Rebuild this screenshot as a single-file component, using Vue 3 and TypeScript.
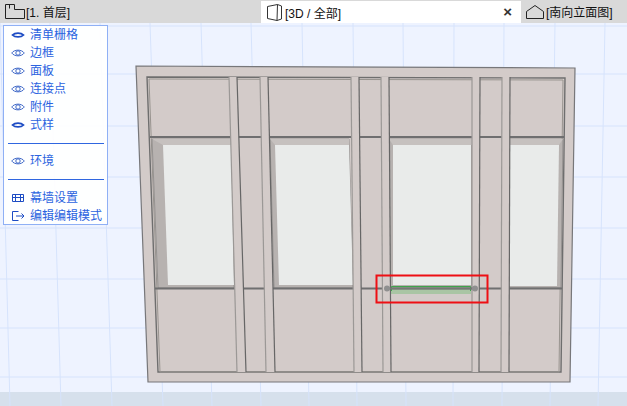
<template>
  <div class="app">
    <div class="tabs">
      <div class="tab first">
        <svg class="tab-icon" width="20" height="15" viewBox="0 0 20 15">
          <path d="M0.5 0.5H9.5V5.5H19.5V14.5H0.5Z M4.5 0.5V4.5" fill="none" stroke="#222" stroke-width="1" />
        </svg>
        <span>[1. 首层]</span>
      </div>
      <div class="tab active">
        <svg class="tab-icon" width="17" height="18" viewBox="0 0 17 18">
          <path d="M1.5 3.5L11.5 1.5L15.5 3V16L11 17.5L1.5 15.5Z M11.5 1.5L11 17.5" fill="none" stroke="#333" stroke-width="1" />
        </svg>
        <span>[3D / 全部]</span>
        <span class="close">×</span>
      </div>
      <div class="tab last">
        <svg class="tab-icon" width="18" height="14" viewBox="0 0 18 14">
          <path d="M0.5 6.5L9 0.5L17.5 6.5V13.5H0.5Z" fill="none" stroke="#222" stroke-width="1" />
        </svg>
        <span>[南向立面图]</span>
      </div>
    </div>

    <div class="stage">
      <svg class="scene" width="627" height="383" viewBox="0 23 627 383">
        <rect x="0" y="23" width="627" height="369" fill="#eef3ff" />
        <rect x="0" y="392" width="627" height="14" fill="#d6e0ec" />
        <g stroke="#d6e3fc" stroke-width="1" fill="none">
          <line v-for="l in gridV" :key="l[0]" :x1="l[0]" y1="23" :x2="l[1]" y2="406" />
          <line v-for="y in gridH" :key="y" x1="0" :y1="y" x2="627" :y2="y" />
        </g>

        <!-- wall -->
        <polygon points="136,66 575,68 570,382 148,382" fill="#d3cbc9" stroke="#77777a" stroke-width="1.2" />
        <polygon points="147,77 565,78 561,372 158,372" fill="#d3cbc9" stroke="#6e6e6e" stroke-width="1.4" />
        <polygon points="149,79 563,80 559,372 160,372" fill="none" stroke="#98948f" stroke-width="1" />

        <!-- window openings -->
        <g v-for="w in windows" :key="w.glass">
          <polygon :points="w.reveal" fill="#b7b2b0" stroke="#8a8886" stroke-width="0.8" />
          <polygon :points="w.head" fill="#c6c1bf" />
          <polygon :points="w.glass" fill="#e9ebea" />
        </g>

        <!-- transoms -->
        <line x1="150" y1="137" x2="564" y2="137" stroke="#6f6f70" stroke-width="2" />
        <line x1="155" y1="288.5" x2="562" y2="288.5" stroke="#6f6f70" stroke-width="2" />

        <!-- mullions -->
        <g v-for="m in mullions" :key="m[0]">
          <polygon :points="`${m[0]},77 ${m[1]},77 ${m[3]},372 ${m[2]},372`" fill="#d3cbc9" />
          <line :x1="m[0]" y1="77" :x2="m[2]" y2="372" stroke="#9b9896" stroke-width="1.2" />
          <line :x1="m[1]" y1="77" :x2="m[3]" y2="372" stroke="#666" stroke-width="1.2" />
        </g>

        <!-- selected segment -->
        <rect x="391" y="286" width="80" height="8" fill="#7fc07f" fill-opacity="0.5" />
        <path d="M391.5 291V286.5H470.5V291" fill="none" stroke="#3fa34d" stroke-width="1" />
        <line x1="387" y1="288.5" x2="475" y2="288.5" stroke="#777" stroke-width="2" />
        <circle cx="387" cy="288.5" r="3" fill="#8f8f8f" />
        <circle cx="475" cy="288.5" r="3" fill="#8f8f8f" />
        <rect x="376.5" y="275.5" width="111" height="27" fill="none" stroke="#ee0f14" stroke-width="2" />
      </svg>

      <div class="menu">
        <div v-for="row in topRows" :key="row.label" class="row">
          <svg class="eye" width="14" height="10" viewBox="0 0 14 10">
            <template v-if="row.on">
              <path d="M1.5 5C4 2.4 10 2.4 12.5 5C10 7.6 4 7.6 1.5 5Z" fill="#fff" stroke="#1d4cc4" stroke-width="1.8" />
            </template>
            <template v-else>
              <path d="M0.7 5C3.5 1.2 10.5 1.2 13.3 5C10.5 8.8 3.5 8.8 0.7 5Z" fill="none" stroke="#3f68c8" stroke-width="1" />
              <circle cx="7" cy="5" r="2.2" fill="none" stroke="#3f68c8" stroke-width="1" />
            </template>
          </svg>
          <span>{{ row.label }}</span>
        </div>
        <div class="sep first-sep"></div>
        <div class="row">
          <svg class="eye" width="14" height="10" viewBox="0 0 14 10">
            <path d="M0.7 5C3.5 1.2 10.5 1.2 13.3 5C10.5 8.8 3.5 8.8 0.7 5Z" fill="none" stroke="#3f68c8" stroke-width="1" />
            <circle cx="7" cy="5" r="2.2" fill="none" stroke="#3f68c8" stroke-width="1" />
          </svg>
          <span>环境</span>
        </div>
        <div class="sep second-sep"></div>
        <div class="row">
          <svg class="eye" width="14" height="10" viewBox="0 0 14 10">
            <path d="M1.5 1.5H12.5V8.5H1.5Z M1.5 4.5H12.5 M4.5 1.5V8.5 M9.5 1.5V8.5" fill="none" stroke="#1d4cc4" stroke-width="1" />
          </svg>
          <span>幕墙设置</span>
        </div>
        <div class="row">
          <svg class="eye" width="14" height="12" viewBox="0 0 14 12">
            <path d="M7.5 1.5H1.5V10.5H7.5 M5 6H13 M10.5 3.5L13 6L10.5 8.5" fill="none" stroke="#1d4cc4" stroke-width="1" />
          </svg>
          <span>编辑编辑模式</span>
        </div>
      </div>
    </div>
  </div>
</template>

<script setup lang="ts">
const topRows = [
  { label: '清单栅格', on: true },
  { label: '边框', on: false },
  { label: '面板', on: false },
  { label: '连接点', on: false },
  { label: '附件', on: false },
  { label: '式样', on: true },
]

// x at top of the canvas, x at the bottom
const gridV = [
  [0, 10], [50, 61], [100, 112], [150, 163], [201, 212], [251, 261], [302, 309],
  [353, 357], [403, 406], [454, 453], [504, 502], [555, 550], [605, 598],
]
const gridH = [26, 74, 126, 177, 228, 279, 328, 377]

const windows = [
  {
    reveal: '152,139 231,139 234,288 158,288',
    head: '152,139 231,139 231,145 163,145',
    glass: '163,145 231,145 234,285 168,285',
  },
  {
    reveal: '270,139 349,139 353,288 274,288',
    head: '270,139 349,139 349,145 275,145',
    glass: '275,145 349,145 353,285 279,285',
  },
  {
    reveal: '389,139 472,139 472,288 390,288',
    head: '389,139 472,139 472,145 393,145',
    glass: '393,145 471,145 471,285 393,285',
  },
  {
    reveal: '509,139 563,139 561,288 509,288',
    head: '509,139 563,139 559,145 510,145',
    glass: '510,145 559,145 557,286 509,286',
  },
]

// top left, top right, bottom left, bottom right
const mullions = [
  [229, 237, 237, 246],
  [260, 268, 266, 275],
  [351, 359, 354, 362],
  [381, 389, 383, 391],
  [472, 480, 472, 479],
  [502, 510, 501, 509],
]
</script>

<style scoped>
.app {
  width: 627px;
  height: 406px;
  overflow: hidden;
  font-family: "Liberation Sans", "Noto Sans CJK SC", sans-serif;
  font-size: 12px;
}

.tabs {
  display: flex;
  height: 23px;
  background: #d9d9d9;
  color: #111;
}

.tab {
  display: flex;
  align-items: center;
  gap: 2px;
  white-space: nowrap;
}

.tab.first {
  width: 261px;
  padding-left: 5px;
  gap: 1px;
  box-sizing: border-box;
}

.tab.active {
  width: 260px;
  margin-top: 1px;
  padding-left: 5px;
  padding-right: 9px;
  box-sizing: border-box;
  background: #fff;
}

.tab.last {
  padding-left: 5px;
  gap: 2px;
}

.tab-icon {
  flex: none;
}

.close {
  margin-left: auto;
  margin-bottom: 2px;
  font-size: 15px;
  font-weight: 700;
  color: #333;
}

.stage {
  position: relative;
  height: 383px;
}

.scene {
  display: block;
}

.menu {
  position: absolute;
  top: 2px;
  left: 3px;
  box-sizing: border-box;
  width: 105px;
  height: 200px;
  border: 1px solid #8fb0f5;
  background: rgba(255, 255, 255, 0.93);
  color: #2b63e0;
}

.row {
  display: flex;
  align-items: center;
  height: 18px;
  line-height: 18px;
  padding-left: 7px;
}

.eye {
  flex: none;
  width: 14px;
  margin-right: 5px;
}

.sep {
  height: 1px;
  margin: 0 3px 0 4px;
  background: #2f66e0;
}

.first-sep {
  margin-top: 9px;
  margin-bottom: 8px;
}

.second-sep {
  margin-top: 9px;
  margin-bottom: 9px;
}
</style>
